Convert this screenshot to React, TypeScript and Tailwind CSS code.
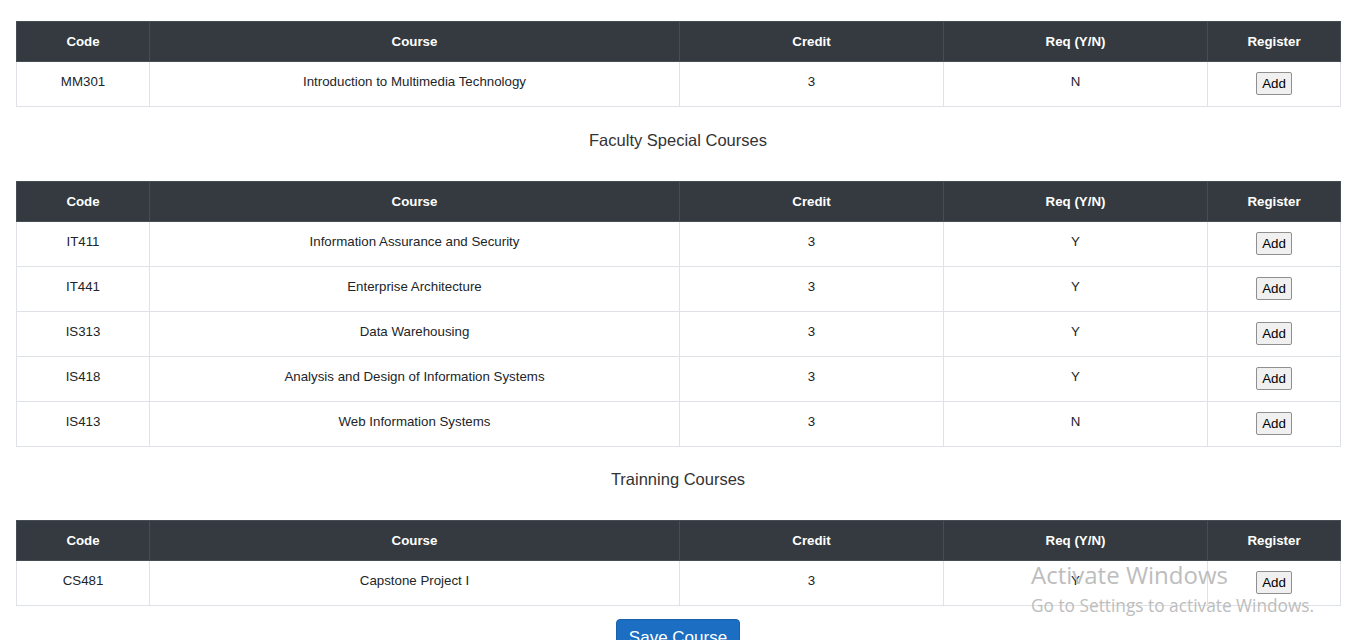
interface Course {
  code: string;
  name: string;
  credit: number;
  required: "Y" | "N";
}

const generalCourses: Course[] = [
  { code: "MM301", name: "Introduction to Multimedia Technology", credit: 3, required: "N" }
];

const facultyCourses: Course[] = [
  { code: "IT411", name: "Information Assurance and Security", credit: 3, required: "Y" },
  { code: "IT441", name: "Enterprise Architecture", credit: 3, required: "Y" },
  { code: "IS313", name: "Data Warehousing", credit: 3, required: "Y" },
  { code: "IS418", name: "Analysis and Design of Information Systems", credit: 3, required: "Y" },
  { code: "IS413", name: "Web Information Systems", credit: 3, required: "N" }
];

const trainingCourses: Course[] = [
  { code: "CS481", name: "Capstone Project I", credit: 3, required: "Y" }
];

const headers = ["Code", "Course", "Credit", "Req (Y/N)", "Register"];
const colWidths = ["w-[133px]", "w-[530px]", "w-[264px]", "w-[264px]", "w-[133px]"];

function CourseTable({ courses }: { courses: Course[] }): React.ReactElement {
  return (
    <table className="w-[1323px] table-fixed border-collapse text-[13.3px] text-[#212529]">
      <colgroup>
        {colWidths.map((width, index) => (
          <col className={width} key={index} />
        ))}
      </colgroup>
      <thead>
        <tr className="h-[40px] bg-[#343a40]">
          {headers.map((header) => (
            <th
              className="border border-[#454d55] p-0 text-center align-middle font-bold leading-[18px] text-white"
              key={header}
            >
              {header}
            </th>
          ))}
        </tr>
      </thead>
      <tbody>
        {courses.map((course) => (
          <tr className="h-[45px]" key={course.code}>
            <td className="border border-[#dee2e6] p-0 pt-[11px] text-center align-top leading-[18px]">{course.code}</td>
            <td className="border border-[#dee2e6] p-0 pt-[11px] text-center align-top leading-[18px]">{course.name}</td>
            <td className="border border-[#dee2e6] p-0 pt-[11px] text-center align-top leading-[18px]">{course.credit}</td>
            <td className="border border-[#dee2e6] p-0 pt-[11px] text-center align-top leading-[18px]">{course.required}</td>
            <td className="border border-[#dee2e6] p-0 pt-[10px] text-center align-top leading-[18px]">
              <button
                className="h-[23px] rounded-[2px] border border-[#8f8f8f] bg-[#f0f0f0] px-[5px] text-[13.33px] leading-none text-black"
                type="button"
              >
                Add
              </button>
            </td>
          </tr>
        ))}
      </tbody>
    </table>
  );
}

function SectionTitle({ title, last = false }: { title: string; last?: boolean }): React.ReactElement {
  return (
    <h2
      className={
        last
          ? "w-[1324px] pb-[29px] pt-[20px] text-center text-[16.5px] font-normal leading-[24px] text-[#333333]"
          : "w-[1324px] pb-[29px] pt-[21px] text-center text-[16.5px] font-normal leading-[24px] text-[#333333]"
      }
    >
      {title}
    </h2>
  );
}

export default function App(): React.ReactElement {
  return (
    <div className="relative h-[640px] overflow-hidden bg-white font-['Liberation_Sans',Arial,sans-serif]">
      <div className="ml-4 pt-[21px]">
        <CourseTable courses={generalCourses} />
        <SectionTitle title="Faculty Special Courses" />
        <CourseTable courses={facultyCourses} />
        <SectionTitle last title="Trainning Courses" />
        <CourseTable courses={trainingCourses} />
        <div className="flex w-[1324px] justify-center pt-[13px]">
          <button
            className="h-[38px] rounded-[4px] border border-[#1861ac] bg-[#1b6ec2] px-[12px] text-[17px] leading-[24px] text-white"
            type="button"
          >
            Save Course
          </button>
        </div>
      </div>

      <div className="pointer-events-none absolute left-[1031px] top-[559px] font-['Open_Sans',sans-serif] text-[#bdbdbd]">
        <p className="text-[24px] leading-[32px]">Activate Windows</p>
        <p className="pt-[2px] text-[17.3px] leading-[26px]">Go to Settings to activate Windows.</p>
      </div>
    </div>
  );
}
